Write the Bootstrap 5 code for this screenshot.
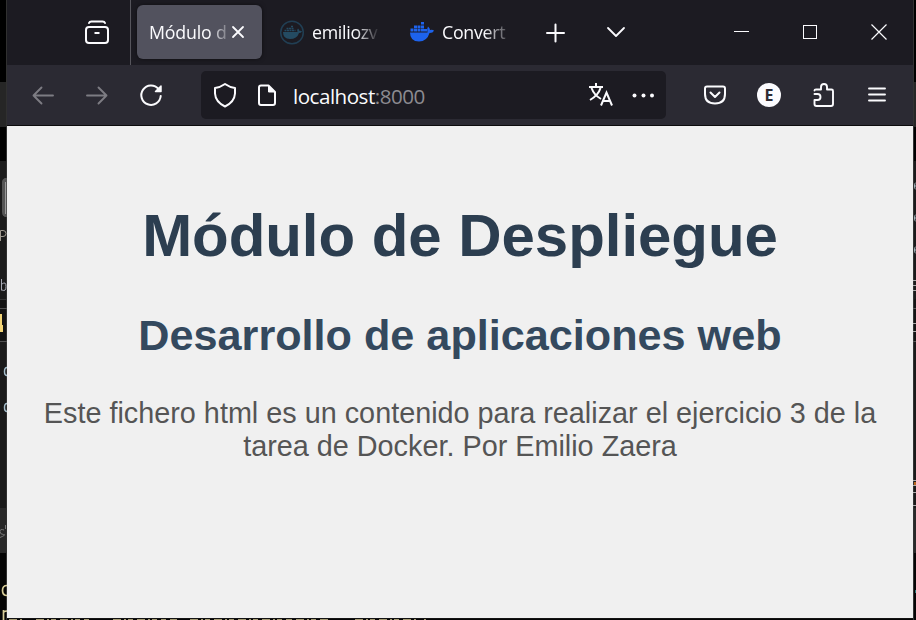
<!DOCTYPE html>
<html lang="es">
<head>
<meta charset="utf-8">
<meta name="viewport" content="width=device-width, initial-scale=1">
<title>Módulo de Despliegue</title>
<link href="https://cdn.jsdelivr.net/npm/bootstrap@5.3.0/dist/css/bootstrap.min.css" rel="stylesheet">
<style>
  body { width: 916px; height: 620px; background: #050505; font-family: "Open Sans", "Noto Sans", sans-serif; }
  svg { display: block; flex: none; }
  .desktop { width: 916px; height: 620px; }
  .edge-left { width: 7px; }
  .edge-right { width: 3px; }
  .edge { background: linear-gradient(#000 0 82px, #262626 82px 127px, #000 127px 161px, #1b1b1b 161px 299px, #141414 299px 341px, #1a1a1a 341px 508px, #292929 508px 553px, #050505 553px); }
  .window { width: 906px; height: 618px; }
  .tabstrip { height: 65px; background: #1c1b22; color: #fbfbfe; font-size: 17.8px; }
  .view-btn { width: 124px; height: 65px; border-right: 1px solid #56555c; padding: 20px 0 0 77px; }
  .tab-active { width: 125px; height: 54px; margin-left: 6px; margin-bottom: 1px; padding-left: 12px; border-radius: 6px; background: #52525e; box-shadow: 0 0 4px rgba(0,0,0,.5); }
  .tab-label { white-space: nowrap; line-height: 28px; margin-bottom: 1px; }
  .label-a { width: 78px; -webkit-mask-image: linear-gradient(90deg, #000 60px, transparent 84px); mask-image: linear-gradient(90deg, #000 60px, transparent 84px); letter-spacing: -.2px; }
  .label-b { width: 67px; margin-left: 6px; -webkit-mask-image: linear-gradient(90deg, #000 44px, transparent 68px); mask-image: linear-gradient(90deg, #000 44px, transparent 68px); letter-spacing: -.3px; }
  .label-c { width: 64px; margin-left: 8px; -webkit-mask-image: linear-gradient(90deg, #000 42px, rgba(0,0,0,.25) 64px); mask-image: linear-gradient(90deg, #000 42px, rgba(0,0,0,.25) 64px); letter-spacing: -.3px; }
  .docker-icon { margin-left: 31px; }
  .toolbar { height: 61px; background: #2b2a33; border-bottom: 1px solid #0c0c0d; padding-bottom: 1px; }
  .urlbar { width: 465px; height: 48px; margin-top: 1px; margin-left: 37px; border-radius: 5px; background: #1c1b22; font-size: 20.6px; letter-spacing: -.5px; color: #fbfbfe; }
  .url-text { width: 132px; margin-left: 15px; line-height: 30px; white-space: nowrap; margin-top: 1px; }
  .port { color: #8c8b91; }
  .page { background: #f0f0f0; font-family: "Liberation Sans", Arial, sans-serif; text-align: center; padding: 75px 30px 0; }
  .page h1 { font-size: 60px; letter-spacing: -.05px; line-height: 69px; font-weight: 700; color: #2c3e50; margin: 0 0 40px; white-space: nowrap; }
  .page h2 { font-size: 43.2px; line-height: 50px; font-weight: 700; color: #34495e; margin: 0 0 37px; white-space: nowrap; }
  .page p { font-size: 28.8px; line-height: 33px; color: #555; margin: 0; }
</style>
<script src="https://cdn.jsdelivr.net/npm/bootstrap@5.3.0/dist/js/bootstrap.bundle.min.js"></script>
</head>
<body class="m-0 overflow-hidden">
<div class="desktop d-flex overflow-hidden">
  <div class="edge edge-left flex-shrink-0">
    <svg width="7" height="620" fill="none">
      <path d="M6.5 0V620" stroke="#303030"/>
      <path d="M7 178.500H5Q2.500 179 2.500 182V212Q2.500 216 5 216.500H7" fill="#555" stroke="#555"/><path d="M5.500 182V214" stroke="#999"/>
      <path d="M.5 241V230.500H3Q6 230.500 6 233.500T3 236.500H.5" stroke="#9f998f"/>
      <path d="M1.500 279V290.500M2 284Q6 281 6 286.500T2 290" stroke="#a6a8b2"/>
      <path d="M0 299.500H7" stroke="#343434"/><path d="M0 308.500H7M0 341.500H7" stroke="#515151"/>
      <path d="M0 314H2V325H3V332H0Z" fill="#f2d477"/>
      <path d="M7 367.500Q4.500 367.500 4.500 371.500T7 375.500M7 403.500Q4.500 403.500 4.500 407.500T7 411.500" stroke="#a5bdca" stroke-width="1.500"/>
      <path d="M4 530Q0 528.500 0 531.500T3.500 534.500T0 537.500M5.500 525V529" stroke="#777"/>
      <path d="M7 585.500Q2.500 585.500 2.500 590.500T7 595.500M3.500 610V620M4 612Q5 611 7 611" stroke="#d7cc98" stroke-width="1.700"/>
    </svg>
  </div>
  <div class="d-flex flex-column flex-shrink-0">
    <main class="window d-flex flex-column">
      <div class="tabstrip d-flex align-items-center flex-shrink-0">
        <div class="view-btn">
          <svg width="26" height="25" fill="none" stroke="#fbfbfe" stroke-width="2" stroke-linecap="round"><rect x="2" y="7" width="22" height="16" rx="3"/><path d="M5 3Q5.500 1.500 7.500 1.500H18.500Q20.500 1.500 21 3"/><path d="M10.500 13H15.500" stroke-linecap="butt"/></svg>
        </div>
        <div class="tab-active d-flex align-items-center">
          <div class="tab-label label-a">Módulo d</div>
          <svg width="22" height="22" fill="none" stroke="#fbfbfe" stroke-width="1.800" stroke-linecap="round"><path d="M6 6L16 16M16 6L6 16"/></svg>
        </div>
        <svg class="ms-3" width="28" height="26" fill="none"><circle cx="14" cy="12.500" r="11.300" stroke="#213f54" stroke-width="1.500"/><path d="M5 12H19.500Q18.500 9.500 20 8.500Q21.500 9.500 21.500 11Q23 10.500 24 11.500Q23 13 21 13Q19 19 12 19Q5 19 5 12Z" fill="#244b62"/><path d="M6.500 10.500H17.500M8.500 8.500H15.500M13 6.500H15" stroke="#244b62" stroke-width="1.700" stroke-dasharray="2 .5"/></svg>
        <div class="tab-label label-b">emiliozv</div>
        <svg class="docker-icon" width="24" height="24" fill="#1d63ed"><path d="M0 11.500H17.500Q16.500 8 18 5.500Q20 7 20 9Q22.500 8.500 24 9.500Q23 12 19.500 12Q17 20.500 9 20.500Q0 20.500 0 11.500Z"/><path d="M.5 7.500h3v3h-3zM4 7.500h3v3h-3zM7.500 7.500h3v3h-3zM11 7.500h3v3h-3zM14 8h3v2.500h-3zM4 4.500h3v2.500H4zM7.500 4.500h3v2.500h-3zM11 4.500h3v2.500h-3zM11 1h3v2.500h-3z"/></svg>
        <div class="tab-label label-c">Convert</div>
        <svg width="402" height="65" fill="none" stroke="#fbfbfe"><path d="M41 33H58M49.500 24.500V41.500" stroke-width="2" stroke-linecap="round"/><path d="M102 28L110 36L118 28" stroke-width="1.800" stroke-linecap="round" stroke-linejoin="round"/><path d="M228 31.500H243"/><rect x="297.500" y="25.500" width="13" height="13"/><path d="M365.500 24.500L380.500 39.500M380.500 24.500L365.500 39.500" stroke-width="1.200"/></svg>
      </div>
      <div class="toolbar d-flex align-items-center flex-shrink-0">
        <svg width="157" height="59" fill="none" stroke-width="1.900" stroke-linecap="round" stroke-linejoin="round"><path d="M46 30.500H26.500M34.500 22.500L26.500 30.500L34.500 38.500M80 30.500H99.500M91.500 22.500L99.500 30.500L91.500 38.500" stroke="#7d7c83"/><path d="M151.500 24A9.700 9.700 0 1 0 153.700 31" stroke="#fbfbfe" stroke-width="2"/><path d="M154 21V26.500H148.500Z" fill="#fbfbfe" stroke="#fbfbfe" stroke-width="1.500"/></svg>
        <div class="urlbar d-flex align-items-center flex-shrink-0">
          <svg width="77" height="48" fill="none" stroke="#fbfbfe" stroke-width="2" stroke-linejoin="round"><path d="M24 13Q29 16.500 34 17V22.500Q33.500 31 24 35.500Q14.500 31 14 22.500V17Q19 16.500 24 13Z"/><path d="M60 14.500H67.500L74 21V32Q74 34 72 34H60Q58 34 58 32V16.500Q58 14.500 60 14.500Z"/><path d="M67.500 15V21H73.500Z" fill="#fbfbfe" stroke-width="1"/></svg>
          <div class="url-text">localhost<span class="port">:8000</span></div>
          <svg width="241" height="48"><g transform="translate(163 12)" fill="none" stroke="#fbfbfe" stroke-width="2"><path d="M1 4H15M8 0V4M3.500 5Q6 12 13 16M12.500 5Q10.500 12 2 17"/><path d="M13 22.500L18.500 9.500L24 22.500M15 18H22"/></g><g fill="#fbfbfe"><circle cx="209.500" cy="24.500" r="2"/><circle cx="218.500" cy="24.500" r="2"/><circle cx="227" cy="24.500" r="2"/></g></svg>
        </div>
        <svg width="87" height="59" fill="none" stroke="#fbfbfe" stroke-width="2" stroke-linecap="round" stroke-linejoin="round"><path d="M41 21.500H57Q59 21.500 59 23.500V29Q59 38.500 49 38.500T39 29V23.500Q39 21.500 41 21.500Z"/><path d="M44.500 27.500L49 32L53.500 27.500"/></svg>
        <svg width="33" height="59"><circle cx="16" cy="30" r="12" fill="#fbfbfe"/><text x="16" y="36" text-anchor="middle" font-size="16" font-weight="700" fill="#2b2a33">E</text></svg>
        <svg width="120" height="59" fill="none" stroke="#fbfbfe" stroke-width="1.900" stroke-linejoin="round" stroke-linecap="round"><path d="M28.500 25.500Q28.500 24.500 30 24.500H35V22A3 3 0 0 1 41 22V24.500H45.500Q47 24.500 47 26V39Q47 41 45 41H30.500Q28.500 41 28.500 39V35H31.500A3 3 0 0 0 31.500 29H28.500" /><path d="M83 23.500H99M83 29.500H99M83 35.500H99"/></svg>
      </div>
      <section class="page flex-grow-1">
        <h1>Módulo de Despliegue</h1>
        <h2>Desarrollo de aplicaciones web</h2>
        <p>Este fichero html es un contenido para realizar el ejercicio 3 de la<br>tarea de Docker. Por Emilio Zaera</p>
      </section>
    </main>
    <svg width="906" height="2"><path d="M0 0H906" stroke="#222"/><path d="M2 1.500H17M29 1.500H82M106 1.500H159M163 1.500H170M183 1.500H285M289 1.500H323M348 1.500H411M417 1.500H419" stroke="#a49a72" stroke-dasharray="8 3 2 2 5 4"/></svg>
  </div>
  <div class="edge edge-right flex-shrink-0">
    <svg width="3" height="620" fill="none"><path d="M.5 0V620" stroke="#333"/><path d="M3 182.500Q1.500 183 1.500 186T3 189.500M1.500 186H3M3 214.500Q1.500 215 1.500 218T3 221.500M1.500 218H3M3 246.500Q1.500 247 1.500 250T3 253.500M1.500 250H3" stroke="#a9bac2"/><path d="M0 280.500H3M0 285.500H3M0 290.500H3M0 323.500H3M0 331.500H3M0 480.500H3M0 485.500H3M0 492.500H3M0 505.500H3" stroke="#aaa"/><path d="M0 308.500H3M0 341.500H3" stroke="#555"/><path d="M1 482H3V485H1Z" fill="#b6651d"/><path d="M2 590H3V593H2Z" fill="#277777"/></svg>
  </div>
</div>
</body>
</html>
